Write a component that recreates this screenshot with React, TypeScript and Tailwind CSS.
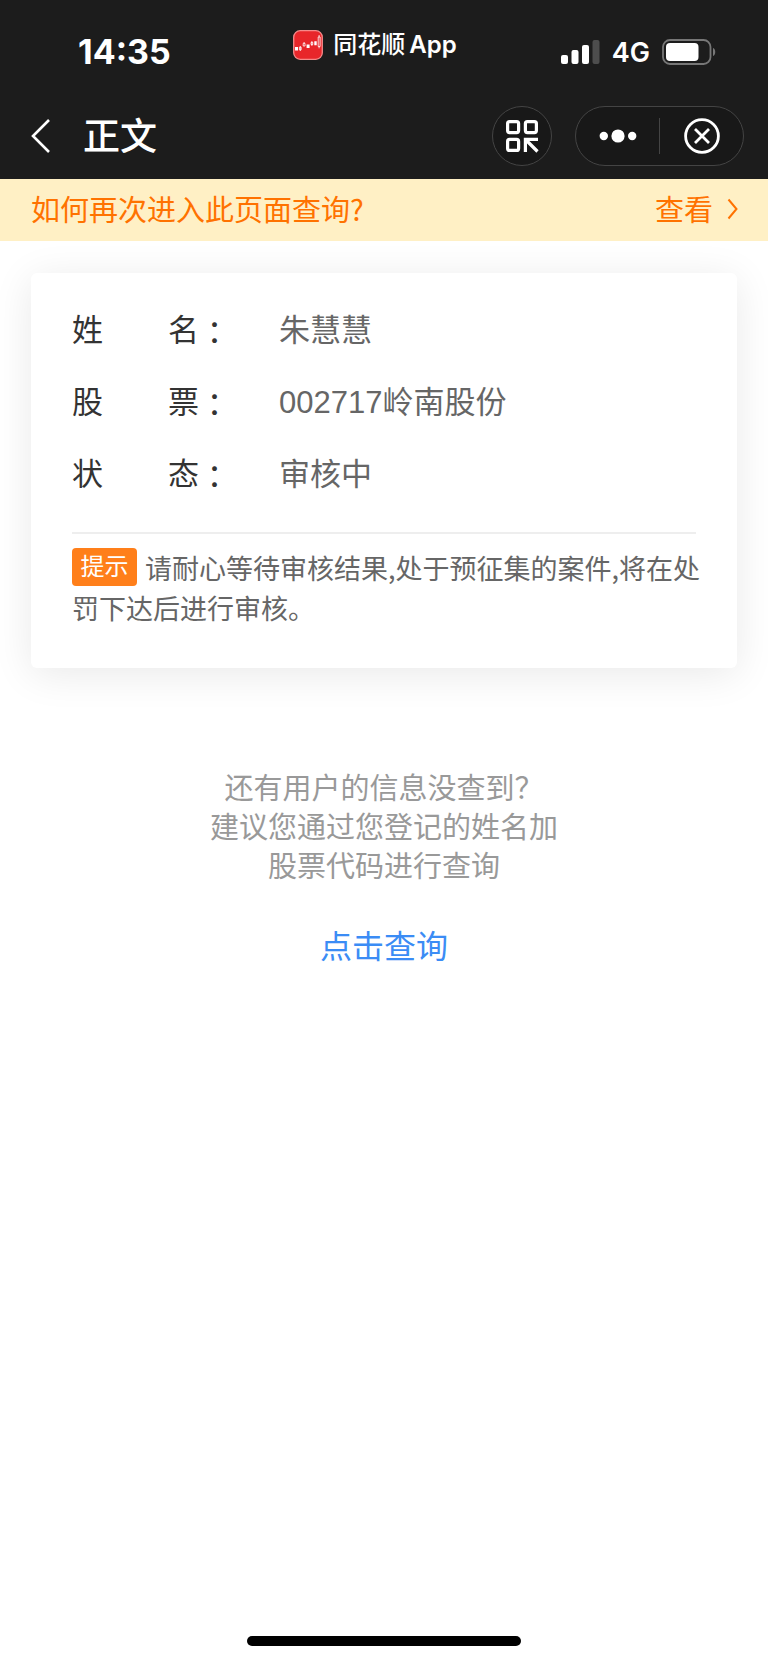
import type { FC, ReactNode } from "react";

const rows = [
  { label: ["姓", "名"], value: "朱慧慧" },
  { label: ["股", "票"], value: "002717岭南股份" },
  { label: ["状", "态"], value: "审核中" },
];

export default (() => {
  return (
    <div
      lang="zh-CN"
      className="flex min-h-screen flex-col bg-white font-['Noto_Sans_CJK_SC',sans-serif]"
    >
      <header className="bg-[#1c1c1c] text-white">
        <StatusBar />
        <NavBar />
      </header>
      <a
        href="#help"
        className="flex h-[62px] items-center justify-between bg-[#fff0c5] pr-[30px] pb-1 pl-[31px] text-[29px] leading-none text-[#ff7200]"
      >
        <span>如何再次进入此页面查询?</span>
        <span className="flex items-end gap-3.5">
          查看
          <svg width="11" height="25" viewBox="0 0 11 25" fill="none">
            <path d="M1.5 1.5 9.5 11l-8 9.5" stroke="#ff7200" strokeWidth="2" />
          </svg>
        </span>
      </a>
      <main>
        <section className="mx-[31px] mt-8 rounded-md bg-white px-[41px] pt-[22px] pb-10 shadow-[0_6px_40px_rgba(0,0,0,0.09)]">
          <dl className="font-['Liberation_Sans','Noto_Sans_CJK_SC',sans-serif] text-[31px]">
            {rows.map(({ label, value }) => (
              <Row key={value} label={label}>
                {value}
              </Row>
            ))}
          </dl>
          <hr className="mt-[21px] border-t-2 border-[#eeeeee]" />
          <p className="-mr-2 pt-3.5 text-[27px] leading-10 text-[#666666]">
            <span className="float-left mr-2 flex h-[38px] w-[65px] items-center justify-center rounded-sm bg-[#ff7f1a] pb-1 text-2xl leading-none text-white">
              提示
            </span>
            请耐心等待审核结果,处于预征集的案件,将在处罚下达后进行审核。
          </p>
        </section>
        <div
          id="help"
          className="mt-[99px] text-center text-[29px] leading-[39px] text-[#999999]"
        >
          <p>还有用户的信息没查到？</p>
          <p>建议您通过您登记的姓名加</p>
          <p>股票代码进行查询</p>
        </div>
        <div className="mt-9 flex justify-center">
          <button className="text-[32px] leading-12 text-[#3b8cf5]">
            点击查询
          </button>
        </div>
      </main>
      <div className="mx-auto mt-auto mb-[17px] h-[10px] w-[274px] rounded-full bg-black" />
    </div>
  );
}) as FC;

const Row: FC<{ label: string[]; children: ReactNode }> = ({
  label,
  children,
}) => (
  <div className="flex h-[72px] items-center">
    <dt className="flex w-[207px] text-[#333333]">
      <span className="flex w-[127px] justify-between">
        <span>{label[0]}</span>
        <span>{label[1]}</span>
      </span>
      <span className="font-['Noto_Sans_CJK_TC',sans-serif]" lang="zh-TW">
        ：
      </span>
    </dt>
    <dd className="text-[#666666]">{children}</dd>
  </div>
);

const StatusBar: FC = () => (
  <div className="grid h-[98px] grid-cols-[1fr_auto_1fr] items-center pt-1.5 font-['Inter','Noto_Sans_CJK_SC',sans-serif]">
    <div className="pl-[78px] text-[34px] leading-none font-bold">14:35</div>
    <div className="flex items-center gap-[10px] pr-[18px] pb-3.5 text-2xl leading-none font-medium">
      <AppLogo />
      <span className="flex gap-1">
        同花顺<span className="font-semibold">App</span>
      </span>
    </div>
    <div className="flex items-center justify-end gap-3 pr-[51px]">
      <svg width="39" height="25" viewBox="0 0 39 25" fill="#fff">
        <rect x="0" y="15" width="7" height="9" rx="2" />
        <rect x="10.5" y="10" width="7" height="14" rx="2" />
        <rect x="21" y="5" width="7" height="19" rx="2" />
        <rect x="31.5" y="0" width="7" height="24" rx="2" fill="#4d4d4d" />
      </svg>
      <span className="text-[27px] leading-none font-semibold">4G</span>
      <svg width="55" height="26" viewBox="0 0 55 26" fill="none">
        <rect
          x="1"
          y="1"
          width="47.5"
          height="24"
          rx="7"
          stroke="#777"
          strokeWidth="1.8"
        />
        <rect x="4" y="4" width="32.5" height="18" rx="4" fill="#fff" />
        <path d="M51 9c3 1 3 7 0 8z" fill="#777" />
      </svg>
    </div>
  </div>
);

const NavBar: FC = () => (
  <nav className="flex h-[81px] items-center pr-6 pb-1.5 pl-[31px]">
    <button aria-label="返回">
      <svg width="20" height="36" viewBox="0 0 20 36" fill="none">
        <path d="M18 2 2 18l16 16" stroke="#fff" strokeWidth="2.6" />
      </svg>
    </button>
    <h1 className="ml-8 pb-0.5 text-[37px] leading-none font-medium">正文</h1>
    <button
      aria-label="扫码"
      className="ml-auto flex size-[60px] items-center justify-center rounded-full border border-[#444444] bg-[#181818]"
    >
      <svg
        width="34"
        height="34"
        viewBox="0 0 34 34"
        fill="none"
        stroke="#fff"
        strokeWidth="3.2"
      >
        <rect x="2.6" y="2.6" width="11" height="11" rx="2" />
        <rect x="20.4" y="2.6" width="11" height="11" rx="2" />
        <rect x="2.6" y="20.4" width="11" height="11" rx="2" />
        <path d="M20.4 33V20.4H33M21 21l11.5 11.5" />
      </svg>
    </button>
    <div className="ml-[23px] flex h-[60px] w-[169px] items-center rounded-full border border-[#444444] bg-[#181818]">
      <button aria-label="更多" className="flex flex-1 justify-center">
        <svg width="38" height="14" viewBox="0 0 38 14" fill="#fff">
          <circle cx="4.8" cy="7" r="4.2" />
          <circle cx="19" cy="7" r="6.6" />
          <circle cx="33.2" cy="7" r="4.2" />
        </svg>
      </button>
      <div className="h-9 w-px bg-[#444444]" />
      <button aria-label="关闭" className="flex flex-1 justify-center">
        <svg
          width="36"
          height="36"
          viewBox="0 0 36 36"
          fill="none"
          stroke="#fff"
          strokeWidth="2.8"
        >
          <circle cx="18" cy="18" r="16.4" />
          <path d="m11 11 14 14M25 11 11 25" />
        </svg>
      </button>
    </div>
  </nav>
);

const AppLogo: FC = () => (
  <svg width="30" height="30" viewBox="0 0 30 30" fill="none">
    <rect
      x="0.7"
      y="0.7"
      width="28.6"
      height="28.6"
      rx="6.5"
      fill="#e8262a"
      stroke="#f58a8a"
      strokeWidth="1.3"
    />
    <path d="M2 17h3v3.5H2zM13.6 14.5h3V18h-3zM21.3 11.2h2.4v4h-2.4z" fill="#fff" />
    <path
      d="M6.4 17.2h1.8v2.6H6.4zM7.3 16v5M10.2 13.4H12V16h-1.8zM11.1 12v1.4M18 12.5h1.8v2H18zM18.9 11v5M25.2 7h1.9v9.5h-1.9zM26.1 5v2M26.1 16.5v1.8"
      stroke="#fff"
      strokeWidth="0.8"
    />
  </svg>
);
